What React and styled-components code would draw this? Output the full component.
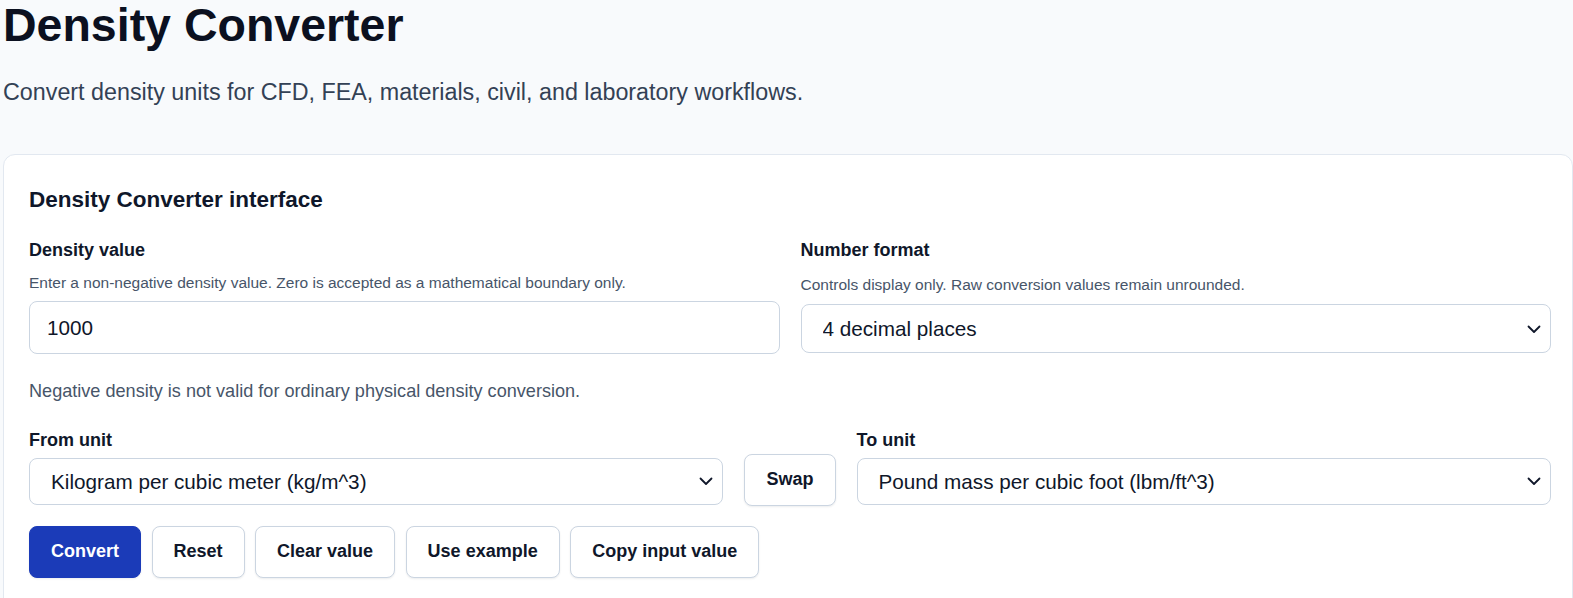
import React, { useState } from 'react';
import styled, { createGlobalStyle } from 'styled-components';

const GlobalStyle = createGlobalStyle`
  html {
    overflow: hidden;
  }
  html, body {
    margin: 0;
    padding: 0;
    background: #f8fafc;
    font-family: "Liberation Sans", Arial, sans-serif;
    font-size: 18px;
    color: #0f172a;
  }
  * { box-sizing: border-box; }
`;

const units = [
  { id: 'kgm3', label: 'Kilogram per cubic meter (kg/m^3)', factor: 1 },
  { id: 'gcm3', label: 'Gram per cubic centimeter (g/cm^3)', factor: 1000 },
  { id: 'gl', label: 'Gram per liter (g/L)', factor: 1 },
  { id: 'lbft3', label: 'Pound mass per cubic foot (lbm/ft^3)', factor: 16.01846337 },
  { id: 'lbin3', label: 'Pound mass per cubic inch (lbm/in^3)', factor: 27679.9047 },
  { id: 'slugft3', label: 'Slug per cubic foot (slug/ft^3)', factor: 515.378818 },
];

const formats = ['2 decimal places', '4 decimal places', '6 decimal places', 'Scientific notation'];

const Chevron = () => (
  <ChevronIcon width="16" height="16" viewBox="0 0 16 16" fill="none">
    <path d="M2.5 5.5 L8 11 L13.5 5.5" stroke="#0f172a" strokeWidth="1.8" strokeLinecap="round" strokeLinejoin="round" />
  </ChevronIcon>
);

const App = () => {
  const [value, setValue] = useState('1000');
  const [format, setFormat] = useState('4 decimal places');
  const [from, setFrom] = useState('kgm3');
  const [to, setTo] = useState('lbft3');

  const handleSwap = () => {
    setFrom(to);
    setTo(from);
  };

  const handleReset = () => {
    setValue('1000');
    setFormat('4 decimal places');
    setFrom('kgm3');
    setTo('lbft3');
  };

  return (
    <Page>
      <GlobalStyle />
      <Title>Density Converter</Title>
      <Subtitle>Convert density units for CFD, FEA, materials, civil, and laboratory workflows.</Subtitle>

      <Card>
        <CardTitle>Density Converter interface</CardTitle>

        <TwoCols>
          <Field>
            <Label htmlFor="density-value">Density value</Label>
            <Hint>Enter a non-negative density value. Zero is accepted as a mathematical boundary only.</Hint>
            <TextInput id="density-value" value={value} onChange={(e) => setValue(e.target.value)} />
          </Field>
          <Field>
            <Label htmlFor="number-format">Number format</Label>
            <Hint $shift>Controls display only. Raw conversion values remain unrounded.</Hint>
            <SelectWrap $shift>
              <Select id="number-format" $tall value={format} onChange={(e) => setFormat(e.target.value)}>
                {formats.map((f) => (
                  <option key={f}>{f}</option>
                ))}
              </Select>
              <Chevron />
            </SelectWrap>
          </Field>
        </TwoCols>

        <Note>Negative density is not valid for ordinary physical density conversion.</Note>

        <UnitRow>
          <Field>
            <Label htmlFor="from-unit">From unit</Label>
            <SelectWrap>
              <Select id="from-unit" value={from} onChange={(e) => setFrom(e.target.value)}>
                {units.map((u) => (
                  <option key={u.id} value={u.id}>{u.label}</option>
                ))}
              </Select>
              <Chevron />
            </SelectWrap>
          </Field>
          <SwapButton type="button" onClick={handleSwap}>Swap</SwapButton>
          <Field>
            <Label htmlFor="to-unit">To unit</Label>
            <SelectWrap>
              <Select id="to-unit" value={to} onChange={(e) => setTo(e.target.value)}>
                {units.map((u) => (
                  <option key={u.id} value={u.id}>{u.label}</option>
                ))}
              </Select>
              <Chevron />
            </SelectWrap>
          </Field>
        </UnitRow>

        <Actions>
          <Button type="button" $primary>Convert</Button>
          <Button type="button" onClick={handleReset}>Reset</Button>
          <Button type="button" onClick={() => setValue('')}>Clear value</Button>
          <Button type="button" onClick={() => setValue('998.2')}>Use example</Button>
          <Button type="button">Copy input value</Button>
        </Actions>
      </Card>
    </Page>
  );
};

const Page = styled.div`
  padding: 0 0 0 3px;
`;

const Title = styled.h1`
  margin: 0;
  font-size: 46.5px;
  line-height: 1.1;
  font-weight: 700;
  color: #0b1020;
`;

const Subtitle = styled.p`
  margin: 24px 0 44px;
  font-size: 23.3px;
  line-height: 1.5;
  color: #334155;
`;

const Card = styled.section`
  background: #fff;
  border: 1px solid #e2e8f0;
  border-radius: 12px;
  padding: 30px 21px 40px 25px;
`;

const CardTitle = styled.h2`
  margin: 0 0 25px;
  font-size: 22.5px;
  line-height: 1.3;
  font-weight: 700;
  color: #0f172a;
`;

const TwoCols = styled.div`
  display: grid;
  grid-template-columns: 1fr 1fr;
  gap: 21px;
`;

const Field = styled.div`
  display: flex;
  flex-direction: column;
  min-width: 0;
`;

const Label = styled.label`
  font-size: 18px;
  line-height: 1.3;
  font-weight: 700;
  color: #0f172a;
`;

const Hint = styled.p`
  margin: ${(p) => (p.$shift ? '11px' : '9px')} 0 0;
  font-size: 15.5px;
  line-height: 1.4;
  color: #475569;
`;

const TextInput = styled.input`
  margin-top: 8px;
  height: 53px;
  padding: 0 17px;
  border: 1px solid #cbd5e1;
  border-radius: 8px;
  background: #fff;
  font-family: inherit;
  font-size: 20.7px;
  color: #0f172a;
  outline: none;
`;

const SelectWrap = styled.div`
  position: relative;
  margin-top: ${(p) => (p.$shift ? '9px' : '6px')};
`;

const Select = styled.select`
  appearance: none;
  width: 100%;
  height: ${(p) => (p.$tall ? '49px' : '47px')};
  padding: 0 44px 0 21px;
  border: 1px solid #cbd5e1;
  border-radius: 8px;
  background: #fff;
  font-family: inherit;
  font-size: 20.7px;
  color: #0f172a;
  outline: none;
`;

const ChevronIcon = styled.svg`
  position: absolute;
  right: 9px;
  top: 50%;
  transform: translateY(-50%);
  pointer-events: none;
`;

const Note = styled.p`
  margin: 24px 0 0;
  font-size: 18.1px;
  line-height: 1.5;
  color: #475569;
`;

const UnitRow = styled.div`
  display: grid;
  grid-template-columns: 1fr auto 1fr;
  align-items: end;
  gap: 21px;
  margin-top: 23px;
`;

const Actions = styled.div`
  display: flex;
  flex-wrap: wrap;
  gap: 10.5px;
  margin-top: 21px;
`;

const Button = styled.button`
  height: 52px;
  padding: 0 21px;
  border: 1px solid ${(p) => (p.$primary ? '#1b3bb8' : '#cbd5e1')};
  border-radius: 8px;
  background: ${(p) => (p.$primary ? '#1b3bb8' : '#fff')};
  color: ${(p) => (p.$primary ? '#fff' : '#0f172a')};
  font-family: inherit;
  font-size: 18px;
  font-weight: 700;
  box-shadow: 0 1px 2px rgba(15, 23, 42, 0.08);
  cursor: pointer;

  &:hover {
    background: ${(p) => (p.$primary ? '#16309a' : '#f1f5f9')};
  }
`;

const SwapButton = styled(Button)`
  margin-bottom: -1px;
`;

export default App;
